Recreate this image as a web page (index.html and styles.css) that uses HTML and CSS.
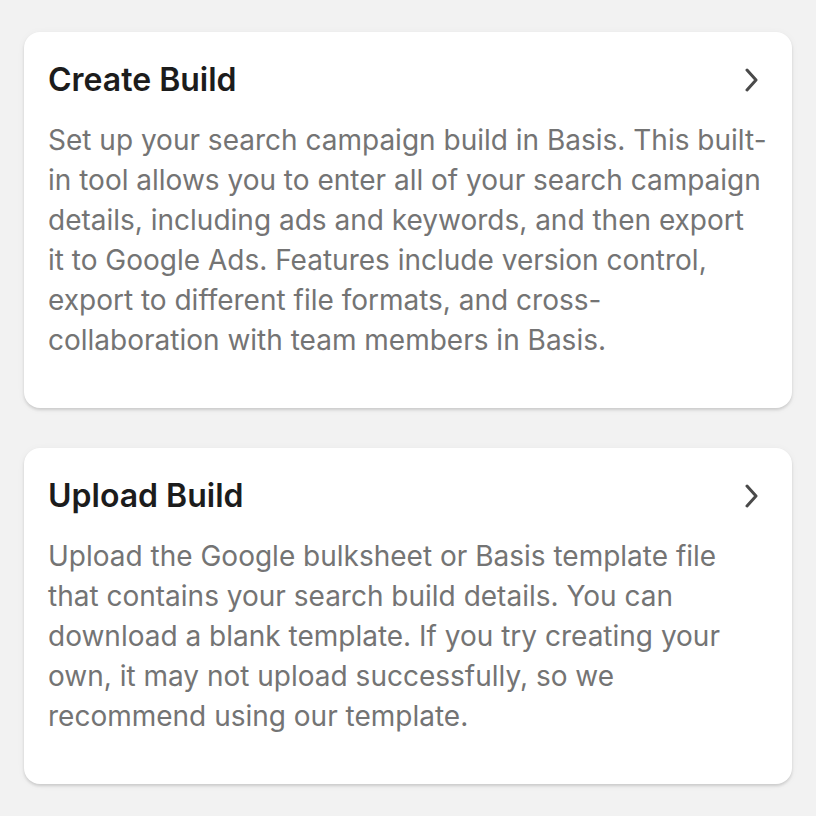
FILE: index.html
```html
<!DOCTYPE html>
<html>
<head>
<meta charset="utf-8">
<link rel="stylesheet" href="styles.css">
</head>
<body>
<main class="list">
  <section class="card">
    <div class="card-head">
      <h2 class="card-title">Create Build</h2>
      <svg class="chev" width="24" height="24" viewBox="0 0 24 24"><polyline points="7,2 16,12 7,22" fill="none" stroke="#4a4a4a" stroke-width="3" stroke-linecap="round" stroke-linejoin="round"/></svg>
    </div>
    <p class="card-text">Set up your search campaign build in Basis. This built-in tool allows you to enter all of your search campaign details, including ads and keywords, and then export it to Google Ads. Features include version control, export to different file formats, and cross-collaboration with team members in Basis.</p>
  </section>
  <section class="card">
    <div class="card-head">
      <h2 class="card-title">Upload Build</h2>
      <svg class="chev" width="24" height="24" viewBox="0 0 24 24"><polyline points="7,2 16,12 7,22" fill="none" stroke="#4a4a4a" stroke-width="3" stroke-linecap="round" stroke-linejoin="round"/></svg>
    </div>
    <p class="card-text">Upload the Google bulksheet or Basis template file that contains your search build details. You can download a blank template. If you try creating your own, it may not upload successfully, so we recommend using our template.</p>
  </section>
</main>
</body>
</html>
```
FILE: styles.css
```css
html, body {
  margin: 0;
  padding: 0;
  background: #f2f2f2;
}
body {
  font-family: Inter, "Noto Sans", sans-serif;
}
.list {
  display: flex;
  flex-direction: column;
  gap: 40px;
  padding: 32px 24px;
}
.card {
  background: #ffffff;
  border-radius: 16px;
  box-shadow: 0 2px 3px rgba(0, 0, 0, 0.14), 0 1px 8px rgba(0, 0, 0, 0.04);
  padding: 24px 24px 48px 24px;
}
.card-head {
  display: flex;
  align-items: center;
  justify-content: space-between;
  height: 48px;
}
.card-title {
  margin: 0;
  font-size: 32px;
  font-weight: 600;
  color: #1c1c1c;
  line-height: 48px;
}
.chev {
  width: 24px;
  height: 24px;
  margin-right: 4px;
}
.card-text {
  margin: 16px 1px 0 0;
  font-size: 28px;
  line-height: 40px;
  color: #747474;
}
```
